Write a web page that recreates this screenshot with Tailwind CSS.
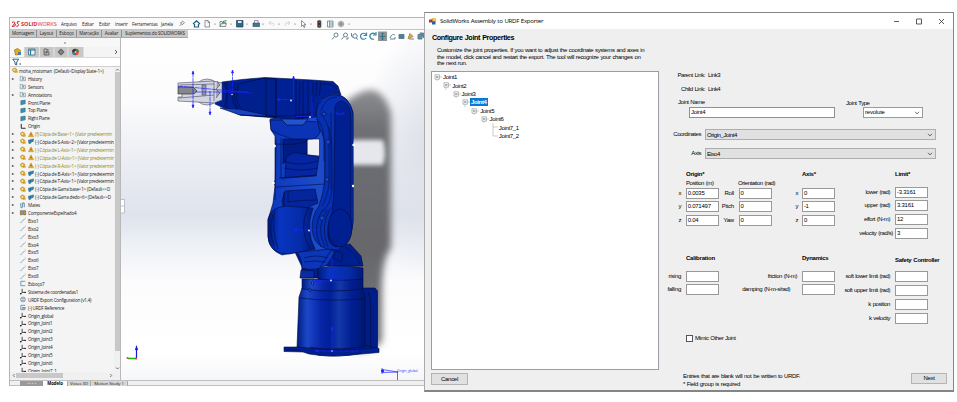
<!DOCTYPE html>
<html lang="en">
<head>
<meta charset="utf-8">
<title>SolidWorks Assembly to URDF Exporter</title>
<script src="https://cdn.jsdelivr.net/npm/@tailwindcss/browser@4"></script>
</head>
<body class="relative h-[402px] w-[957px] overflow-hidden bg-white">

<!-- CAD window -->
<section class="absolute left-[9px] top-[17px] flex h-[369px] w-[416px] flex-col overflow-hidden border-t border-l border-[#b5b5b5] bg-white font-['Open_Sans',sans-serif] text-[4.6px] leading-[8px] whitespace-nowrap text-[#222]">
  <header class="flex h-[12px] shrink-0 items-center border-b border-[#c4c4c4] bg-[#fafafa]">
    <svg class="ml-[1px] h-[8px] w-[10px] shrink-0" viewBox="0 0 10 8" fill="none" stroke="#d8202c" stroke-width="1"><path d="M1 2.500 Q4.500 1 3.500 3.500 Q3 5 1 6.500 Q5 6.500 4.500 4.500 Q4.500 3.500 3 3.500M8.500 1.500 Q5.500 1 6.300 3 Q8.500 4.500 6.800 6.200 L5.300 6.300"/></svg>
    <span class="w-[40px] text-[5.600px] tracking-[-0.05px] text-[#d8303a]"><b>SOLID</b>WORKS</span>
    <nav class="flex tracking-[-0.15px]">
      <span class="w-[21px]">Arquivo</span><span class="w-[17px]">Editar</span><span class="w-[16px]">Exibir</span><span class="w-[17px]">Inserir</span><span class="w-[29px]">Ferramentas</span><span class="w-[18px]">Janela</span>
    </nav>
    <svg class="h-[11px] w-[180px] shrink-0" viewBox="178 18 180 11" fill="none" stroke="#667" stroke-width=".7">
      <path d="M178.500 26 l2-2 M179 22.500 l3 2.500 M180 23 l1.500-2 2 1.700 -2 1.500"/>
      <path d="M192 24 l3.500-3.300 3.500 3.300 M193.500 24 v3 h4 v-3" stroke="#245f7d" stroke-width="1.200"/>
      <path d="M204 20.500 h3 l1.500 1.500 v5 h-4.500z M207 20.500 v2 h1.500"/>
      <path d="M219 26.500 v-5 h2 l1 1 h3 M219 26.500 l1.500-3 h5 l-1 3z" fill="#e8eef0"/><path d="M221.500 23 q1-3 4-2" stroke="#2a9440" stroke-width="1.200"/>
      <path d="M235.500 20.500 h6.500 v6.500 h-6.500z" fill="#2c688a" stroke="#245"/><path d="M237 21 h3.500 v2 h-3.500z" fill="#dfe9ef" stroke="none"/>
      <path d="M252 23 h6.500 v3.500 h-6.500z" fill="#3f7b98" stroke="#356"/><path d="M253.500 20.500 h3.500 v2.500 h-3.500z" fill="#fff"/>
      <path d="M268 23 h4 q2 1 0 3 M270 21 l-2 2 2 2 M289 23 h-4 q-2 1 0 3 M287 21 l2 2 -2 2" stroke="#c8c8cc"/>
      <path d="M300.500 20.500 v6 l1.500-1.500 1 2.500 1-.500 -1-2.300 h2z"/>
      <rect x="316.500" y="20.500" width="3.500" height="7" rx="1" fill="#333"/><circle cx="318.200" cy="22.200" r=".8" fill="#e33" stroke="none"/><circle cx="318.200" cy="25.700" r=".8" fill="#3a5" stroke="none"/>
      <path d="M326.500 21 h5.500 v6 h-5.500z M328.500 21 v6 M329 23 h3 M329 25 h3" stroke="#4b7080"/>
      <circle cx="340" cy="24" r="2.800" fill="#c4c4c4" stroke="#999"/><path d="M338 24 h4 M340 22 v4"/>
      <g fill="#555" stroke="none"><circle cx="214" cy="24" r=".6"/><circle cx="230" cy="24" r=".6"/><circle cx="246" cy="24" r=".6"/><circle cx="262" cy="24" r=".6"/><circle cx="278" cy="24" r=".6"/><circle cx="294" cy="24" r=".6"/><circle cx="310" cy="24" r=".6"/><circle cx="348" cy="24" r=".6"/></g>
    </svg>
  </header>

  <div class="relative flex h-[350px] shrink-0">
    <!-- Feature manager -->
    <aside class="relative z-10 flex h-[350px] w-[111px] shrink-0 flex-col border-r border-[#b8b8b8] bg-[#f4f4f4]">
      <div class="flex h-[8px] w-[178px] shrink-0 items-center divide-x divide-[#8f8f8f] border-b border-[#a8a8a8] bg-[#c9c9c9] text-center text-[4.500px] leading-[7px] tracking-[-0.1px] text-[#222]">
        <span class="w-[27px]">Montagem</span><span class="w-[20px]">Layout</span><span class="w-[20px]">Esboço</span><span class="w-[25px]">Marcação</span><span class="w-[20px]">Avaliar</span><span class="w-[66px] tracking-[-0.16px]">Suplementos do SOLIDWORKS</span>
      </div>
      <div class="flex h-[9px] shrink-0 items-center justify-center bg-[#f7f7f7]"><i class="h-[2px] w-[2px] rounded-full border-[0.5px] border-[#888]"></i></div>
      <svg class="h-[11px] w-[110px] shrink-0" viewBox="10 47 110 11" fill="none" stroke-width=".8">
        <path d="M10 47 h14 v10 h-14z" fill="#f8f8f8"/><path d="M24 47 h59.500 v10 h-59.500z" fill="#c7c7c7"/>
        <path d="M24 47 v10 M39.500 47 v10 M54 47 v10 M68 47 v10" stroke="#eee"/>
        <path d="M14.500 50 l3-1.500 3 2 -1 4 -4 .500z" fill="#e5ac22" stroke="#a87510"/><path d="M18 52 h3 v3 h-3z" fill="#4b7ea4"/>
        <path d="M28.500 49 h6.500 v6 h-6.500z" fill="#eaf2f6" stroke="#33728f"/><path d="M28.500 50 h6.500 M30.500 50 v5" stroke="#33728f" stroke-width="1.200"/>
        <path d="M44 49 h3 v3 h-3z M46 52.500 h3 v2.500 h-3z M44 52 v3 h2 M48 49 v3" stroke="#555"/>
        <path d="M61 48.500 l3.500 3.500 -3.500 3.500 -3.500-3.500z" fill="#555"/><path d="M61 49.500 v5 M58.500 52 h5" stroke="#ccc" stroke-width=".5"/>
        <circle cx="75.500" cy="52" r="3.300" fill="#e34b36"/><path d="M75.500 52 v-3.300 a3.300 3.300 0 0 1 3.300 3.300z" fill="#2d8c4a"/><path d="M75.500 52 h-3.300 a3.300 3.300 0 0 0 3.300 3.300z" fill="#3477b5"/><path d="M75.500 52 h-3.300 a3.300 3.300 0 0 1 3.300-3.300z" fill="#333"/><circle cx="75.500" cy="52" r="1" fill="#f2d23c"/>
        <path d="M115 50 l2 2 -2 2" stroke="#333"/>
        <path d="M10 57.500 h110" stroke="#c8c8c8" stroke-width=".6"/>
      </svg>
      <div class="flex h-[9px] shrink-0 items-center border-b border-[#d0d0d0] bg-white pl-[2px]">
        <svg class="h-[8px] w-[10px]" viewBox="0 0 10 8"><path d="M.700 1.200 h6 L4.700 4 v3 l-1.700-.800 V4z" fill="#fff" stroke="#2d6583"/><path d="M7.500 6 h1.500" stroke="#333"/></svg>
      </div>
      <div class="flex h-[304.500px] shrink-0">
        <div id="features" class="h-[304.500px] w-[104px] overflow-hidden tracking-[-0.22px]"></div>
        <div class="flex w-[6px] flex-col items-center bg-[#f0f0f0]">
          <svg class="h-[5px] w-[5px]" viewBox="0 0 5 5" fill="none" stroke="#555" stroke-width=".8"><path d="M1 3.500 2.500 2 4 3.500"/></svg>
          <i class="h-[279px] w-[5px] bg-[#c8c8c8]"></i>
          <svg class="mt-auto h-[6px] w-[5px]" viewBox="0 0 5 5" fill="none" stroke="#555" stroke-width=".8"><path d="M1 1 2.500 2.500 4 1"/></svg>
        </div>
      </div>
      <div class="flex h-[8px] shrink-0 items-center bg-[#f0f0f0] pl-[2px]">
        <svg class="h-[5px] w-[4px]" viewBox="0 0 4 5" fill="none" stroke="#555" stroke-width=".8"><path d="M2.700 1 1.200 2.500 2.700 4"/></svg>
        <i class="h-[5px] w-[47px] bg-[#c8c8c8]"></i>
        <svg class="ml-[46px] h-[5px] w-[4px]" viewBox="0 0 4 5" fill="none" stroke="#555" stroke-width=".8"><path d="M1.200 1 2.700 2.500 1.200 4"/></svg>
      </div>
    </aside>

    <!-- Model viewport -->
    <svg class="h-[350px] w-[304px] shrink-0" viewBox="121 30 304 350">
      <defs>
        <linearGradient id="sky" x2="0" y2="1"><stop offset="0" stop-color="#fff"/><stop offset=".2" stop-color="#fcfcfd"/><stop offset=".38" stop-color="#ebedf3"/><stop offset=".53" stop-color="#dfe3ed"/><stop offset=".62" stop-color="#eff1f6"/><stop offset=".72" stop-color="#fcfcfd"/><stop offset=".92" stop-color="#fff"/><stop offset="1" stop-color="#f5f6f8"/></linearGradient>
        <radialGradient id="side" gradientUnits="userSpaceOnUse" cx="0" cy="0" r="1" gradientTransform="translate(430 150) scale(70 130)"><stop offset="0" stop-color="#dde0e9"/><stop offset="1" stop-color="#dde0e9" stop-opacity="0"/></radialGradient>
        <linearGradient id="cast" x2="0" y2="1"><stop offset="0" stop-color="#8c8d91"/><stop offset=".15" stop-color="#6e6f73"/><stop offset=".6" stop-color="#66676b"/><stop offset="1" stop-color="#77787c"/></linearGradient>
        <linearGradient id="drum"><stop offset="0" stop-color="#001c80"/><stop offset=".15" stop-color="#1c48c8"/><stop offset=".35" stop-color="#0726a8"/><stop offset=".48" stop-color="#001f98"/><stop offset=".62" stop-color="#1438a8"/><stop offset=".8" stop-color="#001f94"/><stop offset="1" stop-color="#001870"/></linearGradient>
        <linearGradient id="shoulder"><stop offset="0" stop-color="#001a7c"/><stop offset=".25" stop-color="#0835c0"/><stop offset=".7" stop-color="#052ba8"/><stop offset="1" stop-color="#00187a"/></linearGradient>
        <linearGradient id="frame"><stop offset="0" stop-color="#0c38bc"/><stop offset=".6" stop-color="#1d4ccb"/><stop offset="1" stop-color="#0a2fa8"/></linearGradient>
        <filter id="soft" x="-40%" y="-20%" width="180%" height="140%"><feGaussianBlur stdDeviation="3.600"/></filter>
        <filter id="soft2" x="-20%" y="-30%" width="140%" height="160%"><feGaussianBlur stdDeviation="2.200"/></filter>
      </defs>
      <path d="M121 30 h304 v350 h-304z" fill="url(#sky)"/><path d="M121 30 h304 v350 h-304z" fill="url(#side)"/>
      <path d="M340 107 Q358 90 372 90 Q386 93 391 114 V248 Q382 258 382 290 V340 Q378 350 355 352 L340 330z" fill="url(#cast)" filter="url(#soft)"/>
      <path d="M346 140 h37 q4 13 0 25 h-37z" fill="#e5e7ed" filter="url(#soft2)"/>

      <!-- base and waist -->
      <g stroke="#000b3c" stroke-width=".6" stroke-linejoin="round">
        <path d="M360 288 h15 l2.500 3 v57 h-18z" fill="#001c88"/>
        <path d="M284 347 h13 l12-2 h50 l10 1.500 10 2 v4 l-18 1.500 q-30 4 -52 0 l-6-2 -19 -.500z" fill="#001f94"/>
        <path d="M302 288 L299 297 297 347 q35 4 68 0 V296 L362 288z" fill="url(#drum)"/>
        <path d="M299 298 q34 4 66 .500 M302 288 q30 5 60 0 M368 292 q3 4 2.500 12 v43" fill="none"/>
        <path d="M302 279 h61 v10 q-30 4 -61 0z" fill="url(#drum)"/>
        <path d="M294 250 L302 267 301 278 h17 V266 h45 L361 256 350 244 z" fill="#001f8e"/>
        <path d="M318 268 q22-4 45 0 v11 q-22 3 -45 0z" fill="url(#shoulder)"/>
        <path d="M295 251 q7 5 7 17 q13 4 25-3 l8-12 -6-6z" fill="#0b36b8"/>
        <path d="M301 270 l13 1 v7 h-14z" fill="#0a2ca2"/>
        <path d="M304 258 q12-4 24 0 M304 262 q10-2 22 0 M320 267 l12-18 M334 259 q-3-7 4-8 l5 3 -2 8z M345 247 q10 6 15 17" fill="none"/>
        <path d="M286 350 h15 M310 347 q28 6 62 1 M318 355 q20 3 44-2" fill="none"/>
        <ellipse cx="312.500" cy="283" rx="1" ry="2" fill="#3661d8"/><ellipse cx="310" cy="290" rx="1" ry="2" fill="#3661d8"/>
      </g>

      <!-- lower arm -->
      <g stroke="#000b3c" stroke-width=".6" stroke-linejoin="round">
        <path fill-rule="evenodd" d="M270 119 L271 130 275 136 V144 l1 2 -1 2 V180 l-1 3 1 3 L273 203 268 220 V236 Q269 250 282 255 L298 252 330 249 350 238 353 222 V187 l-1-2 1-2 V146 l-1-2 1-2 V112 Q348 96 338 95 L318 98 300 112z M307 139 h12.500 v17 l-12.500-1z" fill="url(#frame)"/>
        <path d="M283 139 h24 v15 l-13 -1 q-6 2 -8 8 l-3 3z" fill="#001d86"/>
        <path d="M286 158 q7-7 12-5 l21 4 -3 19 -31 2z" fill="#0526a0"/>
        <path d="M270 120 h15 l35 2 v10 q-2 6 -8 7 h-20 l-14-5 -7-4z" fill="#0a33b6"/>
        <path d="M281 119 h27 l-5 6 h-16z" fill="#2353cd"/>
        <path d="M285 191 l30-2 3 14 -14 6 h-20 l-2-8z" fill="#04259c"/>
        <path d="M283 161 q16 6 35 0 M284 168 q16 4 34 0 M284 192 v14 M288 191 v11 q12-2 29-2 M276 187 l49-3 M276 144 q28 2 33-5 M281 138 v40 l4 1 M276 140 l-1 60 M279 178 l38-3 M325 120 v66" fill="none"/>
        <path d="M316 112 Q319 95 335 94.500 Q350 96 353 114 V222 Q352 241 338 250 L327 249 Q313 245 312 228 Q312 215 319 206 Q323 195 325 180 V150 Q325 136 319 128z" fill="#0730b0"/>
        <path d="M335 107 Q337 101 342 101 Q351 104 351 119 V222 Q347 245 336 247 Q326 244 328 228 Q334 208 334 185z" fill="#001f90"/>
        <path d="M321 111 Q325 97 337 97 M328 126 q4 9 4 30 V190 q-1 12 -9 22 M331 113 V190 M316 119 q7 4 8 20 v22 M320 113 q8 8 9 20 v50 q-1 13 -7 23" fill="none" stroke="#000f55"/>
        <path d="M268 219 Q271 207 286 206 L313 208 Q305 230 315 249 L289 254 Q269 254 268 237z" fill="url(#shoulder)"/>
        <path d="M273 214 q-5 15 1 32 M275 211 q-4 17 3 38 M308 208 q-10 20 2 41" fill="none"/>
        <ellipse cx="340" cy="228" rx="12" ry="19" fill="#001f90"/><path d="M327 210 q-12 18 -2 36 M323 209 q-12 18 -2 38 M331 207 q-12 20 -3 40" fill="none"/>
        <g fill="#1b48c7"><circle cx="324" cy="114" r="2"/><circle cx="328" cy="142" r="2.200"/><circle cx="327" cy="179.500" r="2"/><circle cx="322" cy="218" r="2.200"/></g>
      </g>
      <g fill="#fff"><circle cx="274.500" cy="146" r="1.300"/><circle cx="273.500" cy="183" r="1.300"/><circle cx="353.500" cy="145" r="1.200"/><circle cx="353" cy="186" r="1.200"/></g>

      <!-- upper arm and wrist -->
      <g stroke="#000b3c" stroke-width=".6" stroke-linejoin="round">
        <path d="M215 104 L222 82 242 79.500 265 77.500 312 80 333 81.500 338 86 341 95 Q329 93 321 99 Q316 104 316 117 L298 119 276 118 240 115 226 109z" fill="#002096"/>
        <path d="M238 84 L262 78.500 276 79 V117 L239 111 Q230 96 238 84z" fill="#00208e"/>
        <path d="M220 108 l19 1 36 8 -35-2z" fill="#1744c0"/>
        <path d="M224 82 q6 12 0 25 M227 81 v27 M235 83 q-7 13 2 27 M239 85 q-6 12 2 24 M266 78 V117 M276 79 V118 M296 80 V118 M300 82 l-1 36 M303 81 v38 M308 81 v32 M313 83 v20 M317 81 l-1 15 M321 82 l-2 14 M240 115 q40 3 70-1 M297 118 q10 1 14-6 M322 84 q10-1 15 5" fill="none"/>
      </g>
      <g stroke="#44485c" stroke-width=".6">
        <circle cx="207" cy="92" r="13" fill="#d8dbe5"/>
        <path d="M178 83 l35-2 9 2 v17 l-8 3 -36-2 v-4 h4 v-10 h-4z" fill="#d3d6e2"/>
        <path d="M178 87 h15 l4 4 -3 3 h-16z" fill="#85868e" stroke="#222"/><path d="M202 85 h4 v10 h-4z M214 81 v20 M217 81 l3 4 -4 4 4 4 -4 5 M179 98 l35-3 M180 85 l34-1" fill="#989cab"/>
      </g>

      <!-- reference frames -->
      <g stroke="#2020ff" fill="#2020ff" stroke-width=".7">
        <path d="M193 72 V107 M232.500 71 V95 M210 91 V114 M178 86 L252 93 M196 92 H248 M293.500 77 V100 M277 99.500 h16 M296 116.500 h18 M312 95 v22 M331 203 v10 M295 230 h22 M316 281 h28 M332 258 v23 M332 328 v22 M316 351 h42" stroke-dasharray="5 .6"/>
        <path d="M192 74 l1-3 1 3z M192 105 l1 3 1-3z M231.500 73 l1-3 1 3z M209 112 l1 3 1-3z M292.500 79 l1-3 1 3z M278 98.500 v2 l3-1z M297 229 v2 l-3-1z M317 280 v2 l-3-1z M331 330 l1-3 1 3z M318 350 v2 l-3-1z"/>
        <path d="M382 369.500 l16 2.500 M382 372.500 l16-.500 M397.500 372 v8 M382 368 v6" fill="none"/><path d="M381.500 370 h2 v2 h-2z"/>
      </g>
      <g fill="#d8d8f0"><circle cx="232" cy="94.500" r=".8"/><circle cx="291" cy="100.500" r="1"/><circle cx="310" cy="117" r="1"/><circle cx="309" cy="230.500" r="1"/><circle cx="331" cy="280.500" r="1"/><circle cx="332" cy="351" r=".8"/></g>
      <g fill="#3333ff" font-family="Open Sans, sans-serif" font-size="3.400"><text x="397" y="371.500">Origin_global</text><text x="336" y="115">Eixo3</text></g>
      <path d="M136.500 358 v-10 M135.500 350 l1-3 1 3" stroke="#1818d8" fill="#1818d8" stroke-width="1.200"/><path d="M137 358.500 h-9" stroke="#1ab31a" stroke-width="1.500"/><circle cx="136" cy="358.500" r="1" fill="#f33"/><circle cx="127.500" cy="358" r="1" fill="#f33"/>
      <path d="M121 199.500 h3.500 v13.500 h-3.500 M121 206 h3" fill="#fff" stroke="#aaa" stroke-width=".7"/>

      <!-- view tools -->
      <g fill="none" stroke="#587888" stroke-width=".9">
        <circle cx="336" cy="35" r="2"/><path d="M334.500 36.500 l-2.500 3"/><circle cx="345.500" cy="35" r="2"/><path d="M344 36.500 l-2.500 3 M346 39 h2 v-2"/><circle cx="355" cy="36" r="2.200"/><path d="M351.500 33 v3 l2 2 M356 38 l2 1.500"/>
        <path d="M366 34.500 a3 3 0 1 0 0 3.500 M366.500 32.500 v3 h-3 M375 34 a3 3 0 1 0 -1 5 M376 32 v3 h-3" stroke="#3482a4" stroke-width="1.200"/>
        <path d="M378 31.500 h9 v9.500 h-9z" fill="#8f9496" stroke="none"/><path d="M382.500 33 v7 M379.500 36.300 h6 M381.500 34 l1-1.200 1 1.200 M381.500 38.500 l1 1.200 1-1.200" stroke="#246c8c"/>
        <path d="M390 38 q2-5 5-3 M390 39 h5 v-2"/><path d="M399 34.500 h5 v4 h-5z" fill="#557e94"/><path d="M408 38.500 l2-5 3 3z" fill="#e7ae46" stroke="#a78240"/><path d="M409 39 h5"/><path d="M418 34.500 h4 v4.500 h-4z M419.500 33 h4 v5" fill="#6193aa"/>
      </g>
    </svg>
  </div>

  <footer class="flex h-[6px] shrink-0 items-center border-y border-[#c0c0c0] bg-[#f0f0f0] text-[4.300px] leading-[5px] tracking-[-0.05px]">
    <span class="ml-[10px] h-[5px] w-[23px] bg-[#999] text-center text-[3px] text-[#ddd]">◂ ◂ ▸ ▸</span><b class="w-[24px] bg-white text-center text-black">Modelo</b><span class="w-[24px] border-x border-[#aaa] bg-[#d6d6d6] text-center">Vistas 3D</span><span class="w-[37px] border-r border-[#aaa] bg-[#d6d6d6] text-center">Motion Study 1</span>
  </footer>
</section>

<!-- Exporter dialog -->
<section class="absolute left-[424px] top-[12px] flex h-[380px] w-[530px] flex-col overflow-hidden border border-b-2 border-[#858585] border-l-[#ababab] bg-[#efefef] font-['Liberation_Sans',sans-serif] text-[6px] leading-[8px] tracking-[-0.42px] [word-spacing:0.5px] whitespace-nowrap text-black">
  <header class="flex h-[16px] shrink-0 items-center bg-white pl-[4px]">
    <svg class="h-[7px] w-[8px]" viewBox="0 0 8 7"><path d="M2.500 .500 h4 v3.500 h-4z" fill="#c8921d"/><path d="M0 1.500 h3 v3 h-3z" fill="#b4361c"/><path d="M3 3.500 h3.500 v3 h-3.500z" fill="#2b59b8"/><path d="M4 0 h3 v3 h-3z" fill="#f1c753"/></svg>
    <h1 class="ml-[3px] font-['Open_Sans',sans-serif] text-[6.100px] tracking-[-0.28px]">SolidWorks Assembly to URDF Exporter</h1>
    <svg class="mr-[8px] ml-auto h-[9px] w-[52px]" viewBox="0 0 52 9" fill="none" stroke="#333" stroke-width=".8"><path d="M1 4.500 h5 M23.500 2 h5 v5 h-5z M46 2 l5 5 M51 2 l-5 5"/></svg>
  </header>

  <div class="flex h-[361px]">
    <div class="flex w-[235px] shrink-0 flex-col">
      <h2 class="mt-[4px] ml-[7px] h-[10px] text-[7.200px] leading-[9px] font-bold tracking-[-0.37px]">Configure Joint Properties</h2>
      <p class="mt-[4px] ml-[12px] h-[20px] leading-[6.600px] tracking-[-0.36px]">Customize the joint properties. If you want to adjust the coordinate systems and axes in<br>the model, click cancel and restart the export. The tool will recognize your changes on<br>the next run.</p>
      <div id="joints" class="mt-[4px] ml-[6px] h-[299px] w-[228px] border border-[#9a9da3] bg-white pt-[1px] pl-[2px] tracking-[-0.33px]"></div>
      <button class="mt-[3px] ml-[6px] h-[12px] w-[37px] border border-[#b4b4b4] bg-[#e1e1e1] leading-[9px] tracking-[-0.3px]">Cancel</button>
    </div>

    <form class="flex w-[293px] shrink-0 flex-col pt-[41.500px]">
      <div class="flex h-[14px]"><span class="w-[45px] text-right">Parent Link:</span><span class="ml-[3px]">Link3</span></div>
      <div class="flex h-[13px]"><span class="w-[45px] text-right">Child Link:</span><span class="ml-[3px]">Link4</span></div>
      <div class="flex h-[9.500px] pl-[18px]"><span class="w-[168px]">Joint Name</span><span class="pt-px">Joint Type</span></div>
      <div class="flex h-[22px] items-start pl-[29px]">
        <span class="h-[11px] w-[146px] border border-[#8f8f8f] bg-white pl-px leading-[9px] tracking-[-0.3px]">Joint4</span>
        <span class="ml-[28px] flex h-[11px] w-[60px] items-center justify-between border border-[#9a9a9a] bg-white pr-[2px] pl-px leading-[9px] tracking-[-0.2px]">revolute<svg class="h-[4px] w-[6px]" viewBox="0 0 6 4" fill="none" stroke="#444" stroke-width=".8"><path d="M1 .800 3 2.900 5 .800"/></svg></span>
      </div>
      <div class="flex h-[19px] items-start"><span class="w-[41px] pt-px text-right">Coordinates</span><span class="ml-[4px] flex h-[11px] w-[231px] items-center justify-between border border-[#adadad] bg-[#e1e1e1] pr-[2px] pl-px">Origin_Joint4<svg class="h-[4px] w-[6px]" viewBox="0 0 6 4" fill="none" stroke="#444" stroke-width=".8"><path d="M1 .800 3 2.900 5 .800"/></svg></span></div>
      <div class="flex h-[22px] items-start"><span class="w-[41px] pt-px text-right">Axis</span><span class="ml-[4px] flex h-[11px] w-[231px] items-center justify-between border border-[#adadad] bg-[#e1e1e1] pr-[2px] pl-px">Eixo4<svg class="h-[4px] w-[6px]" viewBox="0 0 6 4" fill="none" stroke="#444" stroke-width=".8"><path d="M1 .800 3 2.900 5 .800"/></svg></span></div>

      <div class="grid h-[84px] grid-cols-[116px_79px_98px] items-start">
        <section>
          <h3 class="h-[9px] pl-[26px] font-bold tracking-[-0.25px]">Origin*</h3>
          <div class="flex h-[8.500px] pl-[26px]"><span class="w-[52px] shrink-0">Position (m)</span><span>Orientation (rad)</span></div>
          <div class="grid grid-cols-[21px_33px_10.500px_33px] gap-x-[4.700px] gap-y-[2.800px]">
            <span class="justify-self-end pt-px">x</span><span class="h-[11px] border border-[#999] bg-white pl-px leading-[9px] tracking-[-0.25px]">0.0035</span><span class="justify-self-end pt-px tracking-[-0.25px]">Roll</span><span class="h-[11px] border border-[#999] bg-white pl-px leading-[9px]">0</span>
            <span class="justify-self-end pt-px">y</span><span class="h-[11px] border border-[#999] bg-white pl-px leading-[9px] tracking-[-0.25px]">0.071497</span><span class="justify-self-end pt-px tracking-[-0.25px]">Pitch</span><span class="h-[11px] border border-[#999] bg-white pl-px leading-[9px]">0</span>
            <span class="justify-self-end pt-px">z</span><span class="h-[11px] border border-[#999] bg-white pl-px leading-[9px] tracking-[-0.25px]">0.04</span><span class="justify-self-end pt-px tracking-[-0.25px]">Yaw</span><span class="h-[11px] border border-[#999] bg-white pl-px leading-[9px]">0</span>
          </div>
        </section>
        <section>
          <h3 class="h-[17.500px] pl-[26px] font-bold tracking-[-0.25px]">Axis*</h3>
          <div class="grid grid-cols-[22px_33px] gap-x-[4px] gap-y-[2.800px]">
            <span class="justify-self-end pt-px">x</span><span class="h-[11px] border border-[#999] bg-white pl-px leading-[9px]">0</span>
            <span class="justify-self-end pt-px">y</span><span class="h-[11px] border border-[#999] bg-white pl-px leading-[9px]">-1</span>
            <span class="justify-self-end pt-px">z</span><span class="h-[11px] border border-[#999] bg-white pl-px leading-[9px]">0</span>
          </div>
        </section>
        <section>
          <h3 class="h-[16.500px] pl-[40px] font-bold tracking-[-0.25px]">Limit*</h3>
          <div class="grid grid-cols-[35px_33px] gap-x-[5px] gap-y-[2.800px]">
            <span class="justify-self-end pt-px">lower (rad)</span><span class="h-[11px] border border-[#999] bg-white pl-px leading-[9px] tracking-[-0.25px]">-3.3161</span>
            <span class="justify-self-end pt-px">upper (rad)</span><span class="h-[11px] border border-[#999] bg-white pl-px leading-[9px] tracking-[-0.25px]">3.3161</span>
            <span class="justify-self-end pt-px">effort (N-m)</span><span class="h-[11px] border border-[#999] bg-white pl-px leading-[9px] tracking-[-0.25px]">12</span>
            <span class="-mr-[3px] justify-self-end pt-px tracking-[-0.36px]">velocity (rad/s)</span><span class="h-[11px] border border-[#999] bg-white pl-px leading-[9px]">3</span>
          </div>
        </section>
      </div>

      <div class="grid h-[80px] grid-cols-[116px_79px_98px] items-start">
        <section>
          <h3 class="h-[16.500px] pl-[26px] font-bold tracking-[-0.22px]">Calibration</h3>
          <div class="grid grid-cols-[21px_33px] gap-x-[5px] gap-y-[2.800px]">
            <span class="justify-self-end pt-px tracking-[-0.3px]">rising</span><span class="h-[11px] border border-[#999] bg-white"></span>
            <span class="justify-self-end pt-px tracking-[-0.3px]">falling</span><span class="h-[11px] border border-[#999] bg-white"></span>
          </div>
        </section>
        <section>
          <h3 class="h-[16.500px] pl-[26px] font-bold tracking-[-0.25px]">Dynamics</h3>
          <div class="grid grid-cols-[21px_33px] gap-x-[5px] gap-y-[2.800px]">
            <span class="justify-self-end pt-px">friction (N-m)</span><span class="h-[11px] border border-[#999] bg-white"></span>
            <span class="mr-[7px] justify-self-end pt-px">damping (N-m-s/rad)</span><span class="h-[11px] border border-[#999] bg-white"></span>
          </div>
        </section>
        <section>
          <h3 class="h-[16.500px] pt-[2px] pl-[40px] font-bold tracking-[-0.26px]">Safety Controller</h3>
          <div class="grid grid-cols-[35px_33px] gap-x-[5px] gap-y-[3px]">
            <span class="justify-self-end pt-px">soft lower limit (rad)</span><span class="h-[11px] border border-[#999] bg-white"></span>
            <span class="justify-self-end pt-px">soft upper limit (rad)</span><span class="h-[11px] border border-[#999] bg-white"></span>
            <span class="justify-self-end pt-px">k position</span><span class="h-[11px] border border-[#999] bg-white"></span>
            <span class="justify-self-end pt-px">k velocity</span><span class="h-[11px] border border-[#999] bg-white"></span>
          </div>
        </section>
      </div>

      <label class="flex h-[38px] items-start pl-[26px]"><i class="mt-[1px] mr-[2px] h-[7px] w-[7px] border border-[#555] bg-white"></i>Mimic Other Joint</label>
      <div class="flex items-start pl-[23px]">
        <p class="w-[228px] tracking-[-0.35px]">Entries that are blank will not be written to URDF.<br>* Field group is required</p>
        <button class="mt-[1px] h-[11px] w-[36px] border border-[#b4b4b4] bg-[#e1e1e1] leading-[9px] tracking-[-0.3px]">Next</button>
      </div>
    </form>
  </div>
</section>

<script>
  const icons = {
    assembly: '<path d="M1 2.500 3.500 1 6 2.500 5 6 2 5.500z" fill="#e9b429" stroke="#a87510" stroke-width=".6"/><path d="M4 4 h3 v2.500 h-3z" fill="#e0a020"/><circle cx="3.200" cy="3.300" r=".9" fill="#fff3c4"/>',
    folder: '<path d="M.800 1.500 h2.500 v1 h3.500 v4 h-6z" fill="#eef2f4" stroke="#597786" stroke-width=".6"/><path d="M3 5.500 4 3 5 5.500" fill="none" stroke="#2d6583" stroke-width=".7"/>',
    plane: '<path d="M1.500 2 6.500 1.200 V5.500 L1.500 6.700z" fill="#3b8fb0" stroke="#246883" stroke-width=".6"/>',
    origin: '<path d="M2 1 V6 H7" fill="none" stroke="#222" stroke-width="1.100"/>',
    mates: '<path d="M1.500 1 v5 q1.500 1.500 2-1 V2 q1-2 2 0 v4" fill="none" stroke="#6796ad" stroke-width="1.200"/>',
    mirror: '<path d="M1 2 h2 v4.500 h-2z M5 2 h2 v4.500 h-2z" fill="#e9b429" stroke="#333" stroke-width=".6"/><path d="M4 1 v6" stroke="#222" stroke-width=".6"/>',
    axis: '<path d="M1 7 L7 1" stroke="#4b93b3" stroke-width=".9" stroke-dasharray="3 .5"/>',
    sketch: '<path d="M6.500 1.500 H1.500 V6.500 H6.500" fill="none" stroke="#4b93b3" stroke-width="1"/>',
    coords: '<path d="M3 1 V5 L1.500 6.500 M3 5 H6.500" fill="none" stroke="#222" stroke-width=".9"/><circle cx="1.500" cy="6.500" r=".9"/><circle cx="6.500" cy="5" r=".8"/>',
    export: '<circle cx="4" cy="4" r="2.800" fill="#e9eef1" stroke="#5a7683" stroke-width=".7"/><path d="M2 3 h4 M2 5 h4" stroke="#5a7683" stroke-width=".7"/>',
    refs: '<path d="M6.500 1.500 H1.500 V6.500 H6.500" fill="none" stroke="#4b93b3" stroke-width="1"/><path d="M3 3.500 h4 v2 h-4z" fill="#888"/>',
    warn: '<path d="M4 1 7 6.500 H1z" fill="#f3b42c" stroke="#cc8114" stroke-width=".6"/><path d="M4 3 v2" stroke="#222" stroke-width=".8"/>',
    part: '<path d="M1 2.500 7 1 6.500 4 4.500 4.500 3 6.500 1.500 6z" fill="#2f81a8" stroke="#1d5672" stroke-width=".5"/>'
  };
  const svg = n => `<svg class="h-[7px] w-[8px] shrink-0" viewBox="0 0 8 8">${icons[n]}</svg>`;
  const rows = [
    ['folder','History',1],['folder','Sensors'],['folder','Annotations',1],
    ['plane','Front Plane'],['plane','Top Plane'],['plane','Right Plane'],['origin','Origin'],
    ['assembly','(f) Cópia de Base<1> (Valor predetermin',1,'warn'],
    ['assembly','(-) Cópia de S-Axis<2> (Valor predetermin',1,'part'],
    ['assembly','(-) Cópia de L-Axis<1> (Valor predetermin',1,'warn'],
    ['assembly','(-) Cópia de U-Axis<1> (Valor predetermin',1,'warn'],
    ['assembly','(-) Cópia de R-Axis<1> (Valor predetermin',1,'warn'],
    ['assembly','(-) Cópia de B-Axis<1> (Valor predetermin',1,'part'],
    ['assembly','(-) Cópia de T-Axis<1> (Valor predetermin',1,'part'],
    ['assembly','(-) Cópia de Garra base<1> (Default<<D',1,'part'],
    ['assembly','(-) Cópia de Garra dedo<6> (Default<<D',1,'part'],
    ['mates','Mates',1],['mirror','ComponenteEspelhado4',1],
    ...[1,2,3,4,5,6,7,8].map(n => ['axis','Eixo' + n]),
    ['sketch','Esboço7'],['coords','Sistema de coordenadas1'],
    ['export','URDF Export Configuration (v1.4)'],['refs','(-) URDF Reference'],
    ['coords','Origin_global'],...[1,2,3,4,5,6].map(n => ['coords','Origin_Joint' + n]),['coords','Origin_Joint7_1']
  ];
  const esc = s => s.replace(/</g, '&lt;');
  document.getElementById('features').innerHTML =
    `<div class="flex h-[7.9px] items-center pl-px">${svg('assembly')}<span>moha_motoman &nbsp;(Default&lt;Display State-1&gt;)</span></div>` +
    rows.map(([icon, text, open, mark]) =>
      `<div class="flex h-[7.9px] items-center pl-[2px]"><span class="w-[7px] shrink-0 text-[3.5px]">${open ? '▸' : ''}</span>${svg(icon)}${mark ? svg(mark) : ''}<span class="${mark === 'warn' ? 'text-[#8f8a1c]' : mark ? '' : 'ml-px'}">${esc(text)}</span></div>`).join('');

  const joints = ['Joint1','Joint2','Joint3','Joint4','Joint5','Joint6','Joint7_1','Joint7_2'];
  document.getElementById('joints').innerHTML = joints.map((name, i) => {
    const mark = i > 5
      ? `<path d="M3 -1 V${i === 7 ? 4 : 9} M3 4 H8" stroke="#aaa" stroke-width=".6"/>`
      : '<path d="M3 6 V9 M5 4 H8" stroke="#aaa" stroke-width=".6"/><path d="M1 1.800 h4.400 v4.400 h-4.400z" fill="#fff" stroke="#999" stroke-width=".7"/><path d="M2 4 h2.400" stroke="#345" stroke-width=".8"/>';
    return `<div class="flex h-[8.4px] items-center" style="padding-left:${Math.min(i, 6) * 9.3}px"><svg class="h-[8.4px] w-[8px] shrink-0" viewBox="0 0 8 8.4" fill="none">${mark}</svg><span class="${name === 'Joint4' ? 'bg-[#0a78d7] px-px text-white font-bold leading-[8px]' : 'px-px'}">${name}</span></div>`;
  }).join('');
</script>
</body>
</html>
